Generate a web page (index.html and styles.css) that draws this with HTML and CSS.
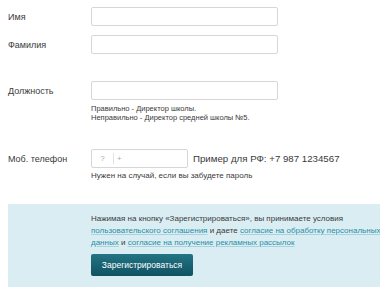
FILE: index.html
```html
<!DOCTYPE html>
<html lang="ru">
<head>
  <meta charset="UTF-8">
  <title>Регистрация</title>
  <link rel="stylesheet" href="styles.css">
</head>
<body>

  <div class="form">
    <div class="row">
      <label class="label">Имя</label>
      <input class="field" type="text">
    </div>
    <div class="row row-next">
      <label class="label">Фамилия</label>
      <input class="field" type="text">
    </div>
    <div class="row row-far">
      <label class="label">Должность</label>
      <input class="field" type="text">
    </div>
    <div class="hint small">
      Правильно - Директор школы.<br>
      Неправильно - Директор средней школы №5.
    </div>
    <div class="row row-phone">
      <label class="label">Моб. телефон</label>
      <div class="phone">
        <span class="flag">?</span>
        <span class="plus">+</span>
      </div>
      <span class="example">Пример для РФ: +7 987 1234567</span>
    </div>
    <div class="hint">Нужен на случай, если вы забудете пароль</div>
  </div>

  <div class="agree">
    <p>
      Нажимая на кнопку «Зарегистрироваться», вы принимаете условия<br>
      <a href="#">пользовательского соглашения</a> и даете <a href="#">согласие на обработку персональных<br>данных</a> и <a href="#">согласие на получение рекламных рассылок</a>
    </p>
    <button class="submit">Зарегистрироваться</button>
  </div>

</body>
</html>
```

FILE: styles.css
```css
html, body {
  margin: 0;
  overflow: hidden;
}
body {
  font-family: "Liberation Sans", Arial, sans-serif;
  color: #3a3a3a;
  background: #fff;
}
.form {
  padding: 7px 0 0 8px;
}
.row {
  display: flex;
  align-items: center;
  height: 19px;
}
.row-next {
  margin-top: 9px;
}
.row-far {
  margin-top: 27px;
}
.row-phone {
  margin-top: 27px;
}
.label {
  width: 83px;
  font-size: 9px;
  color: #3a3a3a;
}
.field {
  width: 187px;
  height: 19px;
  box-sizing: border-box;
  margin: 0;
  padding: 0 5px;
  border: 1px solid #d6d6d6;
  border-radius: 2px;
  background: #fff;
}
.hint {
  margin: 3px 0 0 83px;
  font-size: 8px;
  line-height: 10px;
}
.hint.small {
  margin-top: 4px;
  font-size: 7.5px;
  line-height: 9px;
}
.phone {
  display: flex;
  align-items: center;
  width: 97px;
  height: 19px;
  box-sizing: border-box;
  border: 1px solid #d6d6d6;
  border-radius: 2px;
  font-size: 8px;
  color: #aaa;
}
.flag {
  width: 21px;
  height: 11px;
  line-height: 11px;
  text-align: center;
  border-right: 1px solid #e2e2e2;
}
.plus {
  margin-left: 3px;
}
.example {
  margin-left: 5px;
  font-size: 9.7px;
  white-space: nowrap;
}
.agree {
  margin: 23px 0 0 8px;
  padding: 9px 0 11px 83px;
  background: #daedf3;
  white-space: nowrap;
}
.agree p {
  margin: 0;
  font-size: 8px;
  line-height: 12px;
}
.agree a {
  color: #2a8da5;
  text-decoration: underline;
  text-decoration-color: #a9d2dd;
}
.submit {
  display: block;
  margin-top: 5px;
  width: 102px;
  height: 22px;
  padding: 0;
  border: none;
  border-radius: 2px;
  background: linear-gradient(#237485, #0f5261);
  color: #fff;
  font-family: "Liberation Sans", Arial, sans-serif;
  font-size: 8.5px;
  cursor: pointer;
}
```
